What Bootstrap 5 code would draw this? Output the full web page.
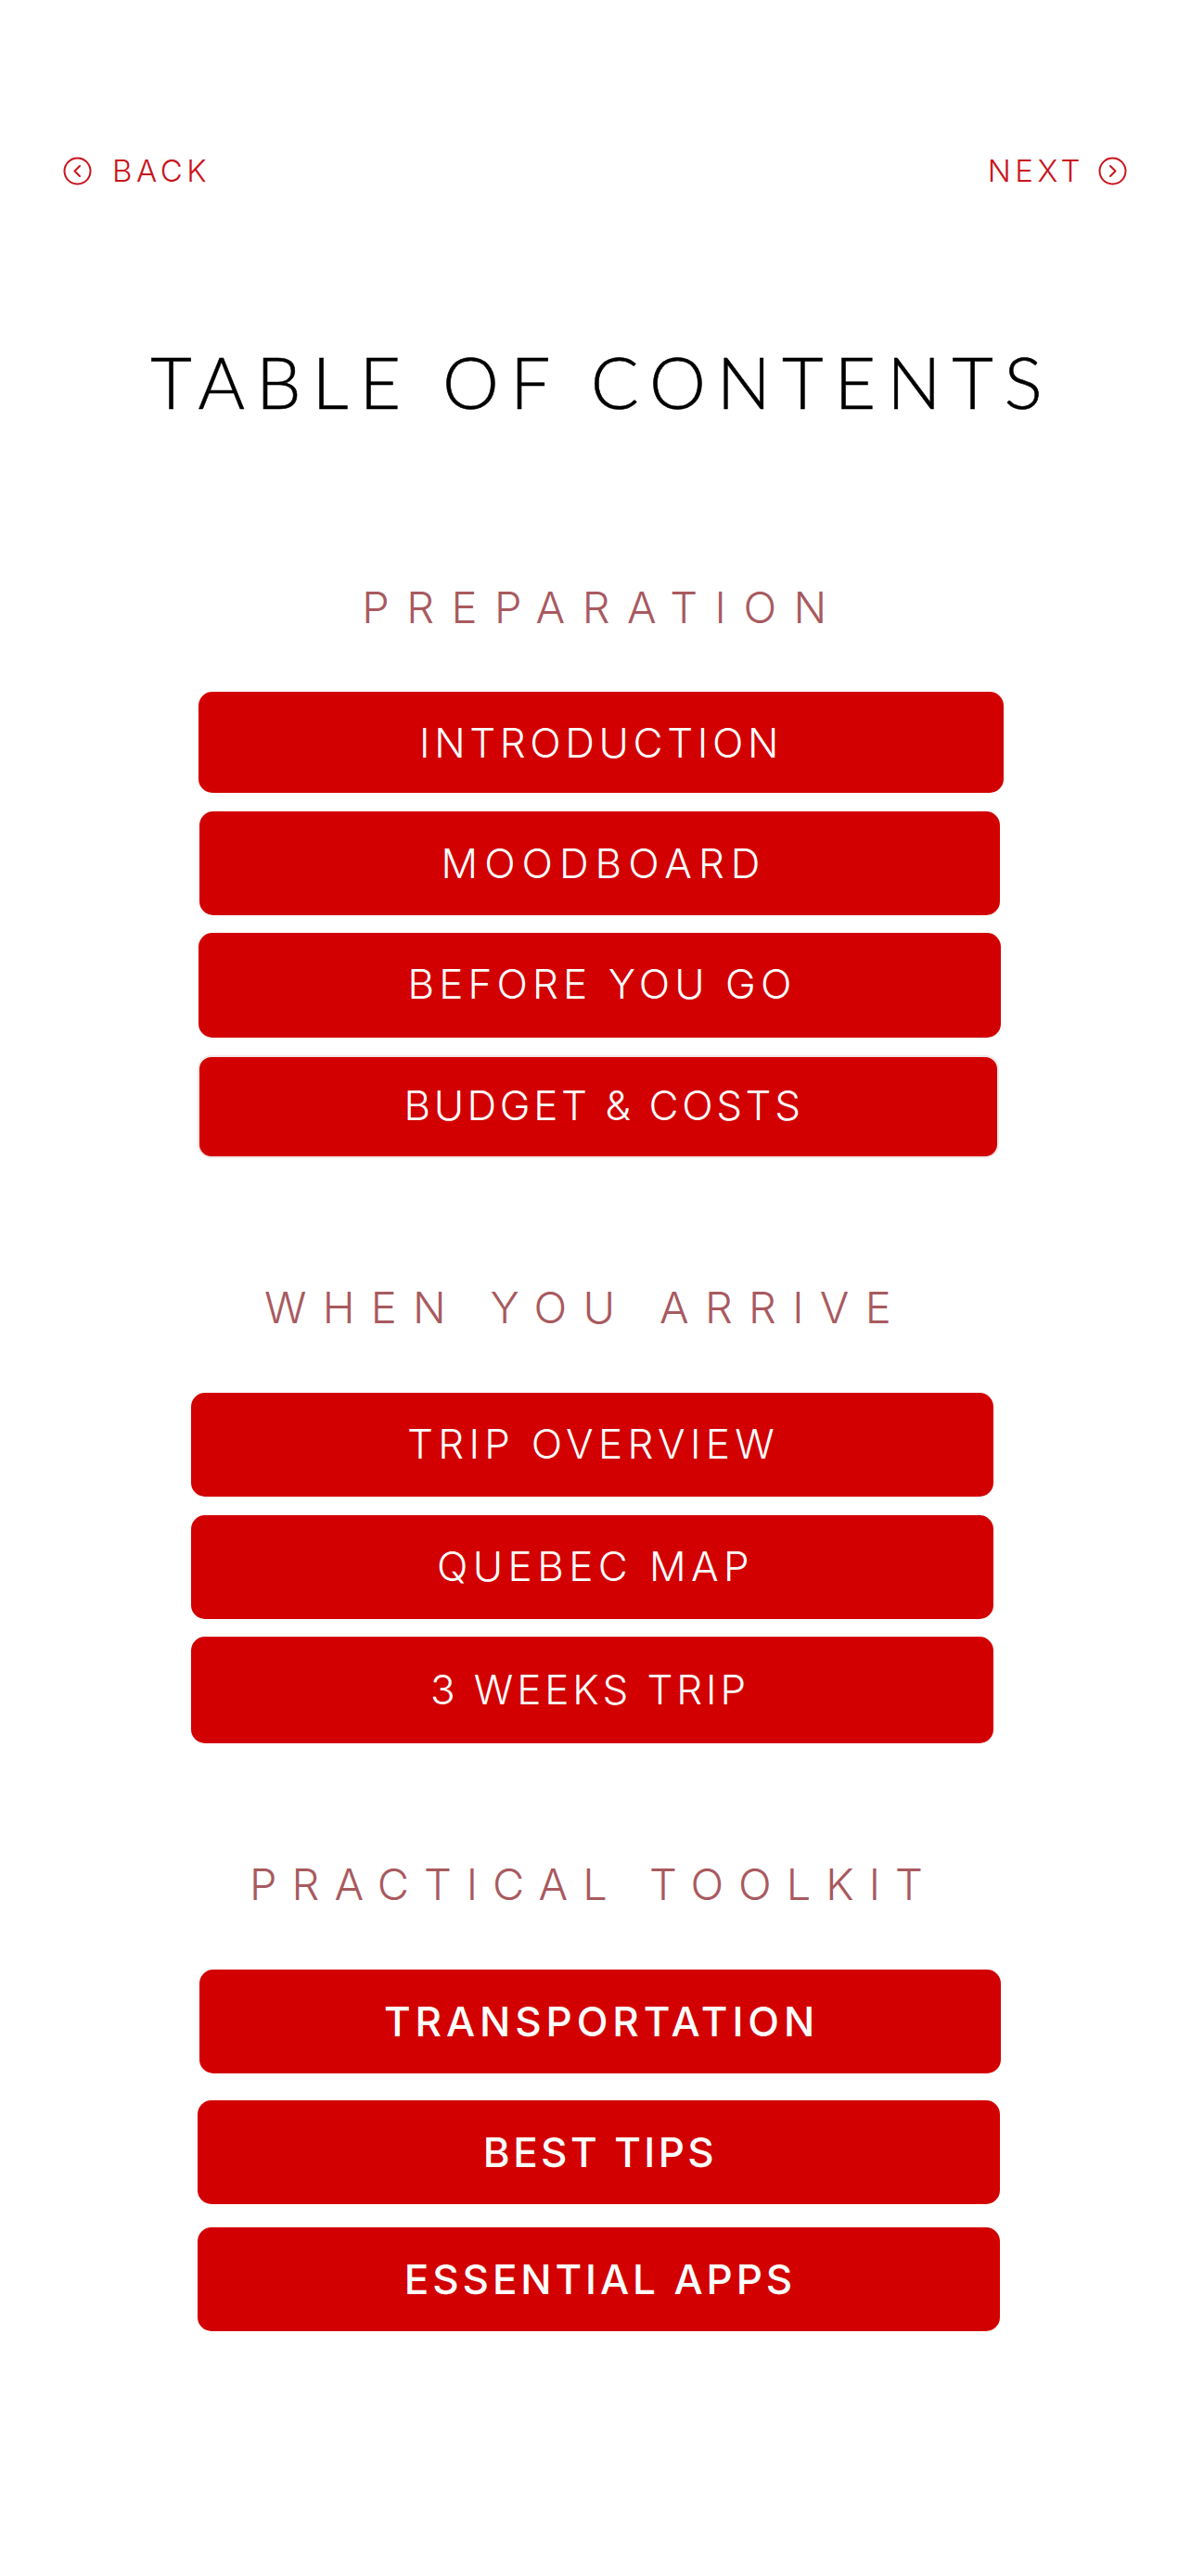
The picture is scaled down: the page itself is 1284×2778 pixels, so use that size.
<!DOCTYPE html>
<html lang="en">

<head>
    <meta charset="UTF-8">
    <meta name="viewport" content="width=device-width, initial-scale=1.0">
    <title>Table of Contents</title>
    <link href="https://cdn.jsdelivr.net/npm/bootstrap@5.3.0/dist/css/bootstrap.min.css" rel="stylesheet">
    <style>
        body {
            background-color: #fff;
            font-family: "Inter", "Liberation Sans", sans-serif;
            padding-top: 164px;
        }

        .top-nav {
            height: 40px;
            padding: 0 69px 0 68px;
        }

        .top-link {
            color: #c9141c;
            font-size: 33px;
            font-weight: 300;
            letter-spacing: 4.5px;
            line-height: 40px;
            text-decoration: none;
        }

        .top-link svg {
            width: 31px;
            height: 31px;
        }

        .link-back { gap: 22px; }
        .link-next { gap: 15px; }

        .page-title {
            font-family: "Lato", "Liberation Sans", sans-serif;
            font-size: 77px;
            font-weight: 300;
            letter-spacing: 12px;
            line-height: 80px;
            color: #000;
            margin: 167px 0 0 14px;
            -webkit-text-stroke: 0.6px #000;
        }

        .group-title {
            color: #a85a5f;
            font-size: 47px;
            font-weight: 300;
            line-height: 60px;
            margin-bottom: 0;
            text-align: center;
        }

        .toc-btn {
            --bs-btn-bg: #d20000;
            --bs-btn-color: #fff;
            --bs-btn-hover-bg: #b80000;
            --bs-btn-hover-color: #fff;
            --bs-btn-border-width: 0;
            --bs-btn-border-radius: 15px;
            --bs-btn-padding-x: 0;
            --bs-btn-padding-y: 0;
            --bs-btn-font-size: 44px;
            --bs-btn-font-weight: 350;
        }

        .toc-heavy {
            --bs-btn-font-weight: 500;
        }

        /* the headings and buttons are not quite aligned in the picture, each has its own box */
        .h-prep { margin-top: 174px; margin-left: 16px; letter-spacing: 18.5px; }
        .h-arrive { margin-top: 131px; margin-left: -21px; letter-spacing: 17.3px; }
        .h-tools { margin-top: 122px; margin-left: -4px; letter-spacing: 16px; }

        .b-intro { margin: 61px 0 0 214px; width: 868px; height: 109px; letter-spacing: 4.6px; }
        .b-mood { margin: 20px 0 0 215px; width: 863px; height: 112px; letter-spacing: 7px; padding-left: 9px; }
        .b-before { margin: 19px 0 0 214px; width: 865px; height: 113px; letter-spacing: 5.1px; padding: 0 0 4px 5px; }
        .b-budget { margin: 19px 0 0 213px; width: 864px; height: 111px; letter-spacing: 3.6px; padding: 0 0 4px 12px; border: 2px solid #f1e6e6; }
        .b-trip { margin: 62px 0 0 206px; width: 865px; height: 112px; letter-spacing: 5.3px; padding: 0 0 2px 2px; }
        .b-map { margin: 20px 0 0 206px; width: 865px; height: 112px; letter-spacing: 5.4px; padding: 0 0 2px 7px; }
        .b-weeks { margin: 19px 0 0 206px; width: 865px; height: 115px; letter-spacing: 3.9px; padding: 0 5px 2px 0; }
        .b-transport { margin: 62px 0 0 215px; width: 864px; height: 112px; letter-spacing: 4.9px; padding-left: 3px; }
        .b-tips { margin: 29px 0 0 213px; width: 865px; height: 112px; letter-spacing: 3.4px; padding-left: 3px; }
        .b-apps { margin: 25px 0 0 213px; width: 865px; height: 112px; letter-spacing: 3.9px; padding-left: 3px; }
    </style>
</head>

<body>
    <nav class="top-nav d-flex justify-content-between align-items-center">
        <a class="top-link link-back d-flex align-items-center" href="#">
            <svg viewBox="0 0 31 31" fill="none" stroke="currentColor" stroke-width="2">
                <circle cx="15.5" cy="15.5" r="14"></circle>
                <path d="M18 10l-5.5 5.5 5.5 5.5" stroke-linecap="round" stroke-linejoin="round"></path>
            </svg>
            <span>BACK</span>
        </a>
        <a class="top-link link-next d-flex align-items-center" href="#">
            <span>NEXT</span>
            <svg viewBox="0 0 31 31" fill="none" stroke="currentColor" stroke-width="2">
                <circle cx="15.5" cy="15.5" r="14"></circle>
                <path d="M13 10l5.5 5.5-5.5 5.5" stroke-linecap="round" stroke-linejoin="round"></path>
            </svg>
        </a>
    </nav>

    <main>
        <h1 class="page-title text-center">TABLE OF CONTENTS</h1>

        <section>
            <h2 class="group-title h-prep">PREPARATION</h2>
            <a class="btn toc-btn b-intro d-flex align-items-center justify-content-center" href="#">INTRODUCTION</a>
            <a class="btn toc-btn b-mood d-flex align-items-center justify-content-center" href="#">MOODBOARD</a>
            <a class="btn toc-btn b-before d-flex align-items-center justify-content-center" href="#">BEFORE YOU GO</a>
            <a class="btn toc-btn b-budget d-flex align-items-center justify-content-center" href="#">BUDGET &amp; COSTS</a>
        </section>

        <section>
            <h2 class="group-title h-arrive">WHEN YOU ARRIVE</h2>
            <a class="btn toc-btn b-trip d-flex align-items-center justify-content-center" href="#">TRIP OVERVIEW</a>
            <a class="btn toc-btn b-map d-flex align-items-center justify-content-center" href="#">QUEBEC MAP</a>
            <a class="btn toc-btn b-weeks d-flex align-items-center justify-content-center" href="#">3 WEEKS TRIP</a>
        </section>

        <section>
            <h2 class="group-title h-tools">PRACTICAL TOOLKIT</h2>
            <a class="btn toc-btn toc-heavy b-transport d-flex align-items-center justify-content-center" href="#">TRANSPORTATION</a>
            <a class="btn toc-btn toc-heavy b-tips d-flex align-items-center justify-content-center" href="#">BEST TIPS</a>
            <a class="btn toc-btn toc-heavy b-apps d-flex align-items-center justify-content-center" href="#">ESSENTIAL APPS</a>
        </section>
    </main>

    <script src="https://cdn.jsdelivr.net/npm/bootstrap@5.3.0/dist/js/bootstrap.bundle.min.js"></script>
</body>
</html>
